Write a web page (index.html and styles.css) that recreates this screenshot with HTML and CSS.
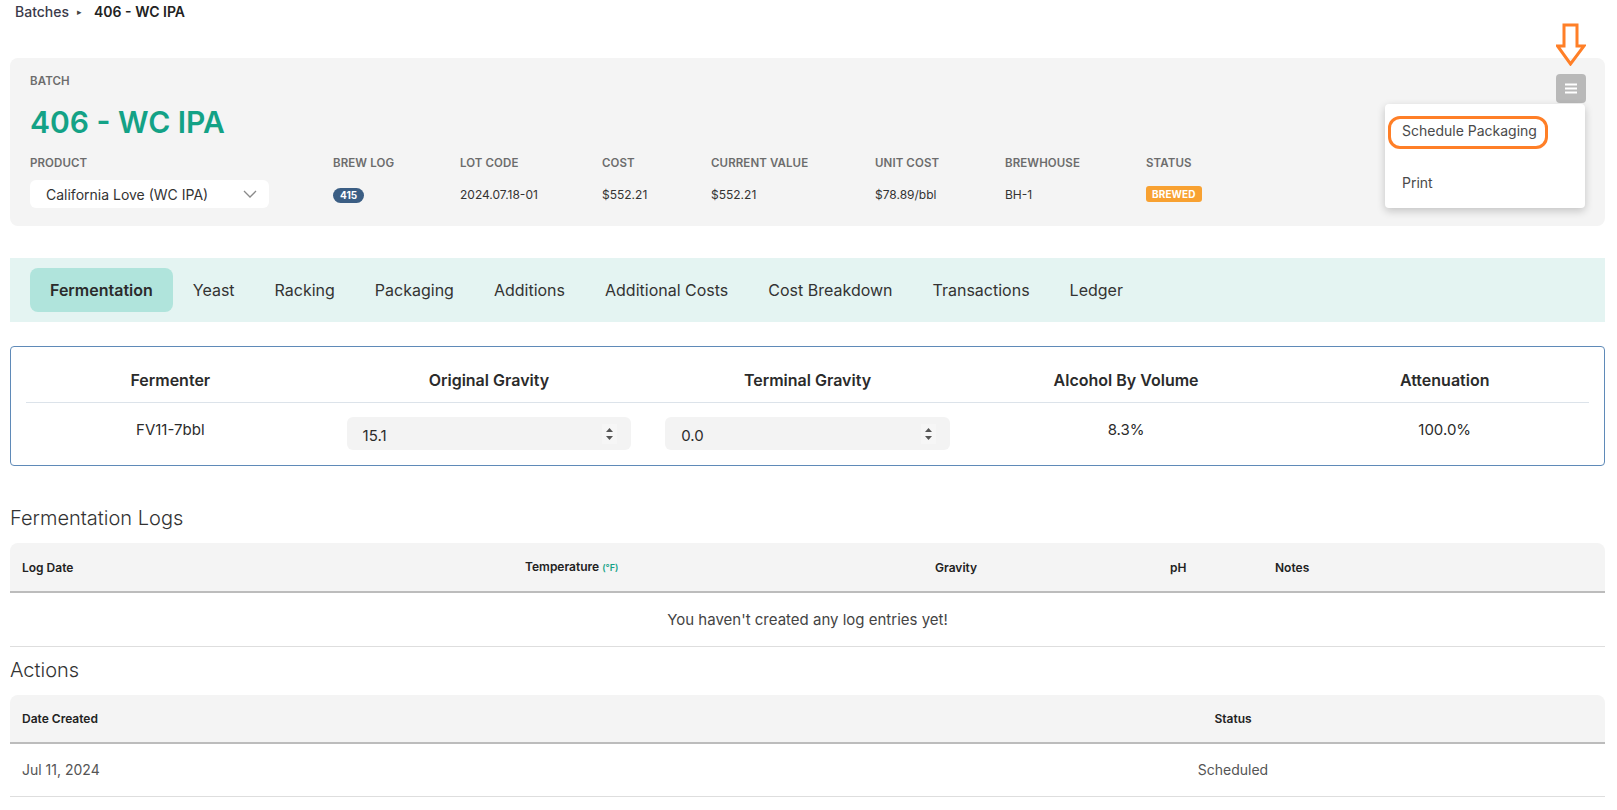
FILE: index.html
```html
<!DOCTYPE html>
<html lang="en">
<head>
  <meta charset="UTF-8">
  <meta name="viewport" content="width=device-width, initial-scale=1.0">
  <title>406 - WC IPA - Batches</title>
  <link rel="stylesheet" href="styles.css">
</head>
<body>
  <div class="page">
    <nav class="crumbs">
      <a class="crumb-link" href="#">Batches</a>
      <span class="crumb-sep">&#9656;</span>
      <span class="crumb-current">406 - WC IPA</span>
    </nav>

    <section class="batch-card">
      <div class="batch-label">BATCH</div>
      <h1 class="batch-title">406 - WC IPA</h1>

      <div class="batch-fields">
        <div class="field">
          <div class="field-label">PRODUCT</div>
          <div class="field-value">
            <div class="select">
              <span>California Love (WC IPA)</span>
              <svg width="14" height="8" viewBox="0 0 14 8"><path d="M1 1l6 6 6-6" fill="none" stroke="#8a8a8a" stroke-width="1.3"/></svg>
            </div>
          </div>
        </div>
        <div class="field">
          <div class="field-label">BREW LOG</div>
          <div class="field-value"><span class="pill">415</span></div>
        </div>
        <div class="field">
          <div class="field-label">LOT CODE</div>
          <div class="field-value">2024.07.18-01</div>
        </div>
        <div class="field">
          <div class="field-label">COST</div>
          <div class="field-value">$552.21</div>
        </div>
        <div class="field">
          <div class="field-label">CURRENT VALUE</div>
          <div class="field-value">$552.21</div>
        </div>
        <div class="field">
          <div class="field-label">UNIT COST</div>
          <div class="field-value">$78.89/bbl</div>
        </div>
        <div class="field">
          <div class="field-label">BREWHOUSE</div>
          <div class="field-value">BH-1</div>
        </div>
        <div class="field">
          <div class="field-label">STATUS</div>
          <div class="field-value"><span class="status-tag">BREWED</span></div>
        </div>
      </div>

      <!-- annotation arrow pointing at the menu button -->
      <svg class="note-arrow" width="30" height="43" viewBox="0 0 30 43">
        <path d="M8 2h13v21h7L14.5 41 1.5 23H8z" fill="none" stroke="#ff7f27" stroke-width="3" stroke-linejoin="miter"/>
      </svg>

      <button class="menu-btn" type="button">
        <svg width="12" height="11" viewBox="0 0 12 11"><path d="M0 1.5h12M0 5.5h12M0 9.5h12" stroke="#fff" stroke-width="1.8"/></svg>
      </button>

      <div class="menu">
        <div class="menu-item">Schedule Packaging</div>
        <div class="menu-item">Print</div>
        <div class="note-ring"></div>
      </div>
    </section>

    <div class="tabs">
      <div class="tab active">Fermentation</div>
      <div class="tab">Yeast</div>
      <div class="tab">Racking</div>
      <div class="tab">Packaging</div>
      <div class="tab">Additions</div>
      <div class="tab">Additional Costs</div>
      <div class="tab">Cost Breakdown</div>
      <div class="tab">Transactions</div>
      <div class="tab">Ledger</div>
    </div>

    <div class="ferm-box">
      <div class="ferm-head">Fermenter</div>
      <div class="ferm-head">Original Gravity</div>
      <div class="ferm-head">Terminal Gravity</div>
      <div class="ferm-head">Alcohol By Volume</div>
      <div class="ferm-head">Attenuation</div>
      <div class="ferm-rule"></div>
      <div class="ferm-cell plain">FV11-7bbl</div>
      <div class="ferm-cell">
        <div class="num-input">
          <span>15.1</span>
          <svg class="spin" width="15" height="20" viewBox="0 0 15 20"><path d="M4 8l3.5-4 3.5 4z M4 12l3.5 4 3.5-4z" fill="#555"/></svg>
        </div>
      </div>
      <div class="ferm-cell">
        <div class="num-input">
          <span>0.0</span>
          <svg class="spin" width="15" height="20" viewBox="0 0 15 20"><path d="M4 8l3.5-4 3.5 4z M4 12l3.5 4 3.5-4z" fill="#555"/></svg>
        </div>
      </div>
      <div class="ferm-cell plain">8.3%</div>
      <div class="ferm-cell plain">100.0%</div>
    </div>

    <h2 class="section-title">Fermentation Logs</h2>
    <table class="data-table">
      <colgroup>
        <col style="width: 503px">
        <col style="width: 410px">
        <col style="width: 235px">
        <col style="width: 105px">
        <col>
      </colgroup>
      <thead>
        <tr>
          <th>Log Date</th>
          <th>Temperature <span class="unit">(°F)</span></th>
          <th>Gravity</th>
          <th>pH</th>
          <th>Notes</th>
        </tr>
      </thead>
      <tbody>
        <tr>
          <td colspan="5" class="empty">You haven't created any log entries yet!</td>
        </tr>
      </tbody>
    </table>

    <h2 class="section-title actions-title">Actions</h2>
    <table class="data-table">
      <colgroup>
        <col style="width: 1083px">
        <col style="width: 280px">
        <col>
      </colgroup>
      <thead>
        <tr>
          <th>Date Created</th>
          <th class="center">Status</th>
          <th></th>
        </tr>
      </thead>
      <tbody>
        <tr>
          <td>Jul 11, 2024</td>
          <td class="center">Scheduled</td>
          <td></td>
        </tr>
      </tbody>
    </table>
  </div>
</body>
</html>
```

FILE: styles.css
```css
* {
  box-sizing: border-box;
}
body {
  margin: 0;
  font-family: Inter, 'Noto Sans', sans-serif;
  color: #2b2b2b;
  background: white;
}
.page {
  padding: 1px 12px 0 10px;
}

/* breadcrumb */
.crumbs {
  display: flex;
  align-items: center;
  height: 20px;
  padding-left: 5px;
  font-size: 14px;
}
.crumb-link {
  color: #3a3a4a;
  font-weight: 500;
  text-decoration: none;
}
.crumb-sep {
  font-size: 9px;
  color: #444;
  margin: 0 12px 0 8px;
}
.crumb-current {
  font-weight: 600;
  color: #222;
}

/* batch header card */
.batch-card {
  position: relative;
  margin-top: 37px;
  background: #f4f4f4;
  border-radius: 8px;
  padding: 16px 20px 18px;
}
.batch-label,
.field-label {
  font-size: 11.5px;
  line-height: 14px;
  font-weight: 600;
  color: #6c6c6c;
  letter-spacing: 0.1px;
}
.batch-title {
  margin: 15px 0 0;
  font-size: 30px;
  line-height: 38px;
  font-weight: 600;
  color: #13a286;
}
.batch-fields {
  display: grid;
  grid-template-columns: 303px 127px 142px 109px 164px 130px 141px auto;
  margin-top: 15px;
}
.field-value {
  display: flex;
  align-items: center;
  height: 28px;
  margin-top: 10px;
  font-size: 12px;
  color: #333;
}
.select {
  display: flex;
  align-items: center;
  justify-content: space-between;
  width: 239px;
  height: 28px;
  padding: 0 12px 0 16px;
  background: white;
  border-radius: 6px;
  font-size: 14px;
  color: #333;
}
.pill {
  background: #3b5e84;
  color: white;
  font-size: 10px;
  font-weight: 700;
  line-height: 15px;
  padding: 0 7px;
  border-radius: 8px;
  margin-top: 3px;
}
.status-tag {
  background: #f8a131;
  color: white;
  font-size: 10px;
  font-weight: 700;
  line-height: 16px;
  padding: 0 6px;
  border-radius: 3px;
  letter-spacing: 0.1px;
}

/* menu */
.menu-btn {
  position: absolute;
  top: 16px;
  right: 19px;
  width: 30px;
  height: 29px;
  border: none;
  border-radius: 4px;
  background: #b9b9b9;
  display: flex;
  align-items: center;
  justify-content: center;
  padding: 0;
}
.menu {
  position: absolute;
  top: 46px;
  right: 20px;
  width: 200px;
  padding: 1px 0 0;
  background: white;
  border-radius: 4px;
  box-shadow: 0 3px 8px rgba(0,0,0,0.2);
  z-index: 2;
}
.menu-item {
  height: 51.5px;
  line-height: 51px;
  padding-left: 17px;
  font-size: 14px;
  color: #4a4a4a;
}
.note-ring {
  position: absolute;
  left: 3px;
  top: 12px;
  width: 160px;
  height: 33px;
  border: 3px solid #ff7f27;
  border-radius: 12px;
}
.note-arrow {
  position: absolute;
  top: -35px;
  right: 19px;
}

/* tabs */
.tabs {
  display: flex;
  align-items: center;
  margin-top: 32px;
  height: 64px;
  padding: 0 20px;
  background: #e4f4f2;
}
.tab {
  padding: 0 20px;
  height: 44px;
  line-height: 44px;
  font-size: 16px;
  color: #333;
  border-radius: 8px;
}
.tab.active {
  background: #b0e4dc;
  font-weight: 600;
  color: #2b2b2b;
}

/* fermentation summary */
.ferm-box {
  display: grid;
  grid-template-columns: repeat(5, 1fr);
  margin-top: 24px;
  border: 1px solid #5f8ab8;
  border-radius: 4px;
}
.ferm-head {
  text-align: center;
  padding: 22px 0 11px;
  font-size: 16px;
  line-height: 22px;
  font-weight: 600;
  color: #2b2b2b;
}
.ferm-rule {
  grid-column: 1 / -1;
  height: 1px;
  margin: 0 15px;
  background: #dce3ea;
}
.ferm-cell {
  display: flex;
  align-items: center;
  justify-content: center;
  padding: 14px 17px 15px;
  font-size: 15px;
  color: #2b2b2b;
}
.ferm-cell.plain {
  padding: 10px 17px 19px;
}
.num-input {
  display: flex;
  align-items: center;
  justify-content: space-between;
  width: 100%;
  height: 33px;
  padding: 3px 14px 0 16px;
  background: #f3f3f3;
  border-radius: 6px;
  font-size: 15px;
}
.spin {
  background: #f6f6f6;
  margin-top: -3px;
}

/* tables */
.section-title {
  margin: 40px 0 13px;
  font-size: 20px;
  line-height: 24px;
  font-weight: 300;
  color: #333;
}
.actions-title {
  margin-top: 11px;
}
.data-table {
  width: 100%;
  border-collapse: separate;
  border-spacing: 0;
  table-layout: fixed;
}
.data-table th {
  text-align: left;
  padding: 16px 12px;
  font-size: 12px;
  line-height: 15px;
  font-weight: 600;
  color: #222;
  background: #f4f4f4;
  border-bottom: 2px solid #bcbcbc;
}
.data-table th:first-child {
  border-top-left-radius: 8px;
}
.data-table th:last-child {
  border-top-right-radius: 8px;
}
.data-table td {
  padding: 17px 12px;
  font-size: 14px;
  line-height: 18px;
  color: #555;
  border-bottom: 1px solid #dedede;
}
.data-table .center {
  text-align: center;
}
.data-table td.empty {
  text-align: center;
  font-size: 15px;
  color: #444;
  padding: 18px 12px 17px;
}
.unit {
  font-size: 9px;
  color: #13a286;
}
```
